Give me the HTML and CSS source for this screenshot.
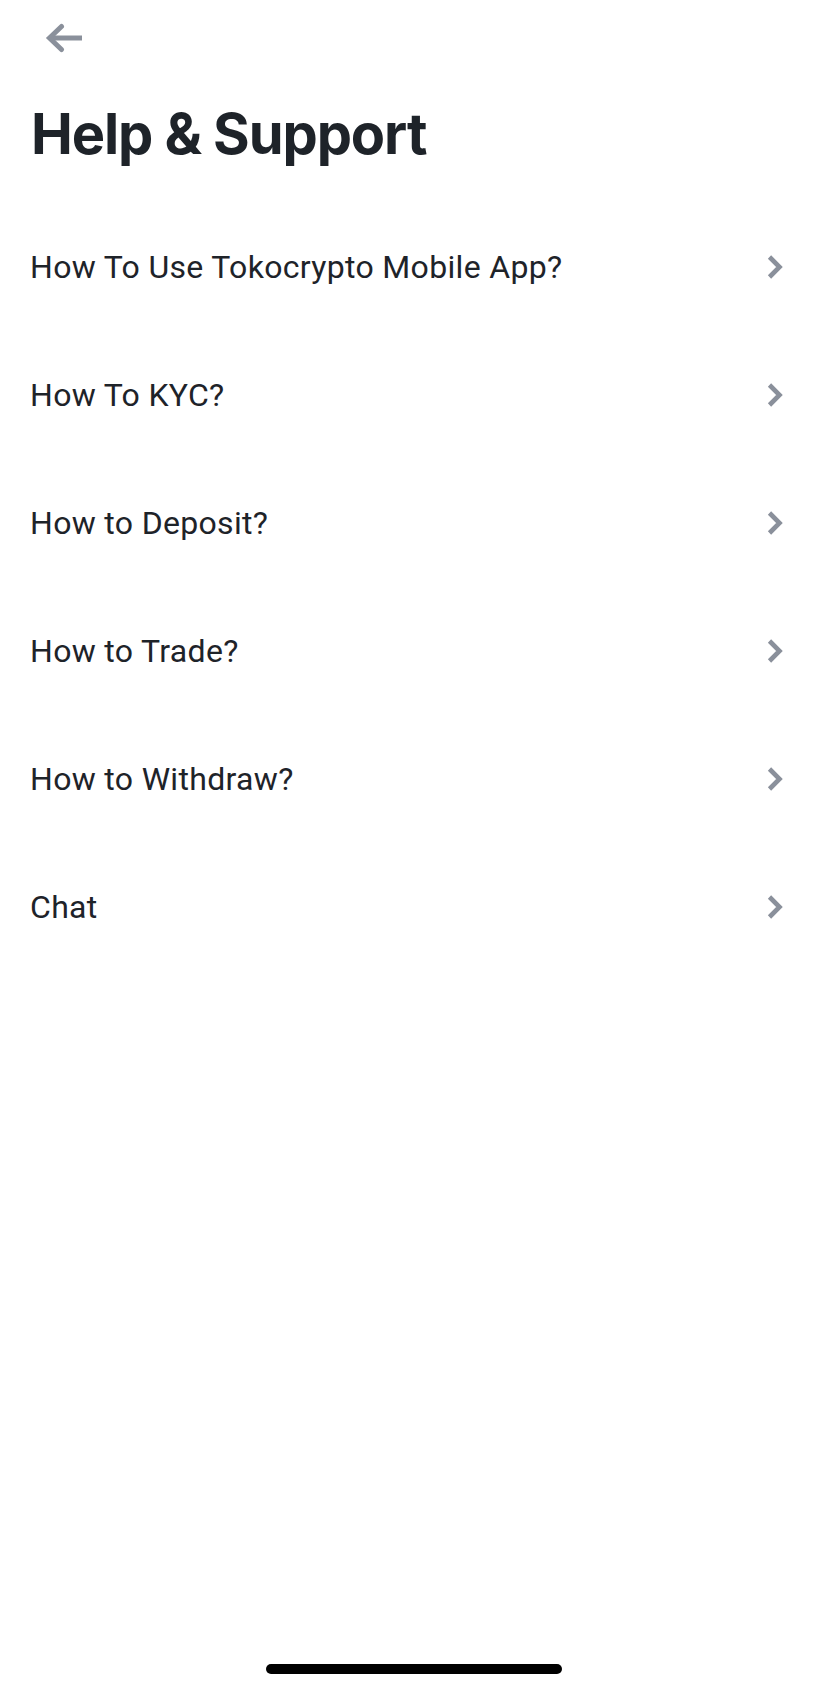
FILE: index.html
```html
<!DOCTYPE html>
<html lang="en">
<head>
<meta charset="utf-8">
<title>Help &amp; Support</title>
<link rel="stylesheet" href="styles.css">
</head>
<body>
<div class="page">
  <header class="topbar">
    <button class="back" aria-label="Back">
      <svg width="38" height="30" viewBox="0 0 38 30" fill="none" stroke="#8a909b" stroke-width="5" stroke-linejoin="miter">
        <path d="M37 15H5"/>
        <path d="M16.5 3.5L4.5 15L16.5 26.5" stroke-linecap="round"/>
      </svg>
    </button>
  </header>
  <h1 class="title">Help &amp; Support</h1>
  <ul class="menu">
    <li class="item"><span class="label">How To Use Tokocrypto Mobile App?</span><svg class="chev" width="18" height="26" viewBox="0 0 18 26" fill="none" stroke="#8a909b" stroke-width="4.6" stroke-linejoin="miter"><path d="M3.5 3L13.5 13L3.5 23"/></svg></li>
    <li class="item"><span class="label">How To KYC?</span><svg class="chev" width="18" height="26" viewBox="0 0 18 26" fill="none" stroke="#8a909b" stroke-width="4.6" stroke-linejoin="miter"><path d="M3.5 3L13.5 13L3.5 23"/></svg></li>
    <li class="item"><span class="label">How to Deposit?</span><svg class="chev" width="18" height="26" viewBox="0 0 18 26" fill="none" stroke="#8a909b" stroke-width="4.6" stroke-linejoin="miter"><path d="M3.5 3L13.5 13L3.5 23"/></svg></li>
    <li class="item"><span class="label">How to Trade?</span><svg class="chev" width="18" height="26" viewBox="0 0 18 26" fill="none" stroke="#8a909b" stroke-width="4.6" stroke-linejoin="miter"><path d="M3.5 3L13.5 13L3.5 23"/></svg></li>
    <li class="item"><span class="label">How to Withdraw?</span><svg class="chev" width="18" height="26" viewBox="0 0 18 26" fill="none" stroke="#8a909b" stroke-width="4.6" stroke-linejoin="miter"><path d="M3.5 3L13.5 13L3.5 23"/></svg></li>
    <li class="item"><span class="label">Chat</span><svg class="chev" width="18" height="26" viewBox="0 0 18 26" fill="none" stroke="#8a909b" stroke-width="4.6" stroke-linejoin="miter"><path d="M3.5 3L13.5 13L3.5 23"/></svg></li>
  </ul>
  <div class="home-indicator"></div>
</div>
</body>
</html>
```
FILE: styles.css
```css
* { box-sizing: border-box; }
html, body { margin: 0; padding: 0; background: #ffffff; }
body { font-family: Roboto, "Liberation Sans", sans-serif; color: #1e2329; }

.page {
  width: 828px;
  height: 1690px;
  display: flex;
  flex-direction: column;
  overflow: hidden;
}

.topbar {
  height: 76px;
  display: flex;
  align-items: center;
  padding-left: 45px;
}

.back {
  border: 0;
  background: none;
  padding: 0;
  display: flex;
  cursor: pointer;
}

.title {
  margin: 26px 0 37px;
  padding-left: 31px;
  font-family: Inter, "Liberation Sans", sans-serif;
  font-weight: 700;
  font-size: 56px;
  line-height: 64px;
  letter-spacing: -1.1px;
  color: #1e2329;
}

.menu {
  list-style: none;
  margin: 0;
  padding: 0;
}

.item {
  height: 128px;
  display: flex;
  align-items: center;
  justify-content: space-between;
  padding: 0 44px 0 30px;
}

.label {
  font-size: 32px;
  line-height: 40px;
  letter-spacing: 0.32px;
  color: #1e2329;
}

.chev { display: block; }

.home-indicator {
  margin: auto auto 16px;
  width: 296px;
  height: 10px;
  border-radius: 5px;
  background: #000;
}
```
